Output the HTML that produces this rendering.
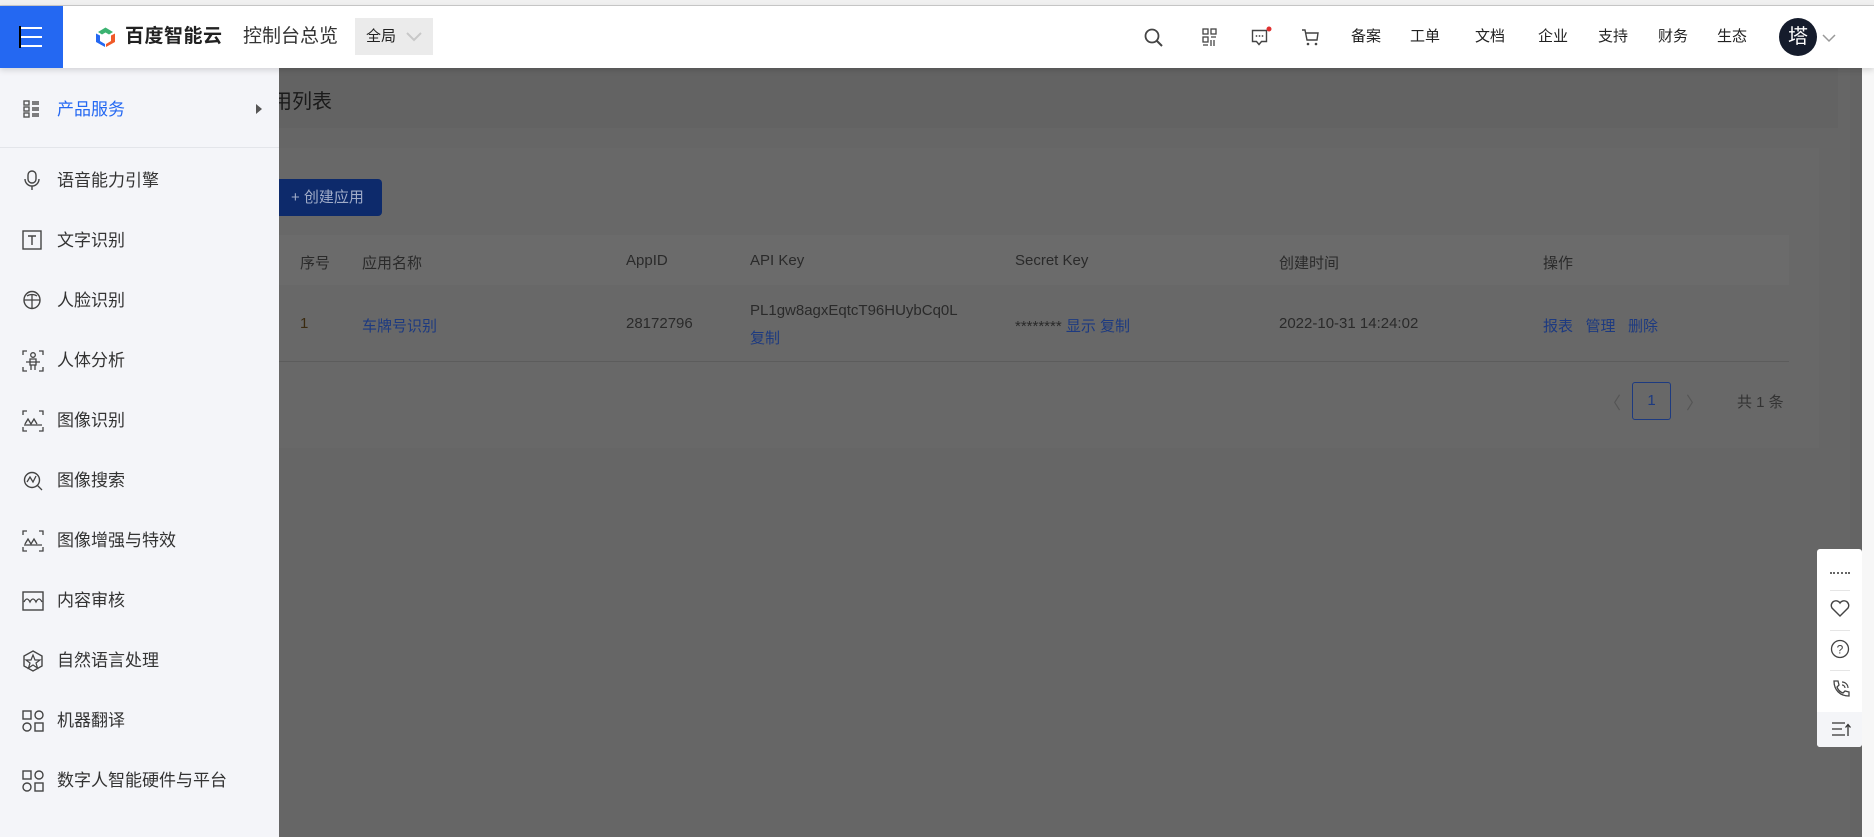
<!DOCTYPE html>
<html><head><meta charset="utf-8">
<style>
*{margin:0;padding:0;box-sizing:border-box}
body{width:1874px;height:837px;overflow:hidden;background:#666;font-family:"Liberation Sans","Noto Sans CJK SC",sans-serif;position:relative;color:#333}
.a{position:absolute}
.top{left:0;top:0;width:1874px;height:6px;background:#f0f0f0;border-bottom:1px solid #ccc}
.hdr{left:0;top:6px;width:1874px;height:62px;background:#fff;box-shadow:0 2px 6px rgba(0,0,0,.15);z-index:3}
.hdr .t{position:absolute;top:0;line-height:62px;font-size:15px;color:#222}
.side{left:0;top:68px;width:279px;height:769px;background:#f4f5f9;z-index:2}
.it{position:absolute;left:0;width:279px;height:30px;font-size:17px;color:#333;line-height:30px}
.it .tx{position:absolute;left:57px;top:1px}
.it svg{position:absolute;left:22px;top:5px}
.g{color:#2a2a2a;font-size:15px}
.lk{color:#1d3a80}
</style></head><body>
<div class="a top"></div>
<div class="a hdr">
  <div class="a" style="left:0;top:0;width:63px;height:62px;background:#2468f2"></div>
  <div class="a" style="left:20px;top:21px;width:22px;height:20px;border-top:2px solid #fff;border-bottom:2px solid #fff"></div>
  <div class="a" style="left:20px;top:30px;width:22px;height:2px;background:#fff"></div>
  <div class="a" style="left:19px;top:20px;width:2px;height:22px;background:#000"></div>
  <svg class="a" style="left:95px;top:20px" width="21" height="22" viewBox="0 0 21 22"><path d="M3 6L10.5 1.5L18 6L14 8.5L10.5 6.5L7 8.5Z" fill="#3cb371"/><path d="M1 7.5L5 9.5V15L10 18V21L1 16Z" fill="#2468f2"/><path d="M20 7.5L16 9.5V15L11 18V21L20 16Z" fill="#f05a28"/></svg>
  <div class="t" style="left:125px;font-size:19px;font-weight:bold;color:#222;letter-spacing:0.5px">百度智能云</div>
  <div class="t" style="left:243px;font-size:19px;color:#333">控制台总览</div>
  <div class="a" style="left:355px;top:12px;width:78px;height:37px;background:#ebebeb"></div>
  <div class="t" style="left:366px;font-size:15px">全局</div>
  <svg class="a" style="left:406px;top:26px" width="16" height="10"><path d="M1 1L8 8L15 1" stroke="#c8c8c8" stroke-width="2" fill="none"/></svg>
  <svg class="a" style="left:1144px;top:22px" width="20" height="20"><circle cx="8" cy="8" r="6.5" stroke="#444" stroke-width="1.8" fill="none"/><path d="M13 13L18 18" stroke="#444" stroke-width="2"/></svg>
  <svg class="a" style="left:1202px;top:22px" width="16" height="20"><g stroke="#444" stroke-width="1.3" fill="none"><rect x="1" y="1" width="5" height="5"/><rect x="9" y="1" width="5" height="5"/><rect x="1" y="9" width="5" height="5"/><path d="M9 9h5M9 12v6M12 12v6M1 17h5"/></g></svg>
  <svg class="a" style="left:1251px;top:20px" width="22" height="22"><path d="M1.5 4.5h14v11h-5l-2.5 3-2.5-3h-4z" stroke="#444" stroke-width="1.4" fill="none"/><circle cx="5.5" cy="10" r=".9" fill="#444"/><circle cx="8.5" cy="10" r=".9" fill="#444"/><circle cx="11.5" cy="10" r=".9" fill="#444"/><circle cx="18" cy="3" r="2.5" fill="#e03030"/></svg>
  <svg class="a" style="left:1301px;top:22px" width="20" height="20"><path d="M1 2h3l2 10h10l1-7H5" stroke="#444" stroke-width="1.4" fill="none"/><circle cx="7" cy="16" r="1.3" fill="#444"/><circle cx="15" cy="16" r="1.3" fill="#444"/></svg>
  <div class="t" style="left:1351px">备案</div>
  <div class="t" style="left:1410px">工单</div>
  <div class="t" style="left:1475px">文档</div>
  <div class="t" style="left:1538px">企业</div>
  <div class="t" style="left:1598px">支持</div>
  <div class="t" style="left:1658px">财务</div>
  <div class="t" style="left:1717px">生态</div>
  <div class="a" style="left:1779px;top:12px;width:38px;height:38px;border-radius:50%;background:#151c2c;color:#fff;font-size:20px;line-height:38px;text-align:center">塔</div>
  <svg class="a" style="left:1822px;top:28px" width="14" height="9"><path d="M1 1L7 7L13 1" stroke="#999" stroke-width="1.5" fill="none"/></svg>
</div>
<div class="a" style="left:279px;top:68px;width:1559px;height:60px;background:#636363"></div>
<div class="a" style="left:272px;top:85px;font-size:20px;color:#1a1a1a">用列表</div>
<div class="a" style="left:279px;top:148px;width:1540px;height:300px;background:#686868"></div>
<div class="a" style="left:279px;top:179px;width:103px;height:37px;background:#0d2a6b;border-radius:0 4px 4px 0;color:#a0acc8;font-size:15px;line-height:37px;padding-left:12px">+ 创建应用</div>
<div class="a" style="left:279px;top:235px;width:1510px;height:50px;background:#6b6b6b"></div>
<div class="a" style="left:279px;top:361px;width:1510px;height:1px;background:#5c5c5c"></div>
<div class="a g" style="left:300px;top:252px">序号</div>
<div class="a g" style="left:362px;top:252px">应用名称</div>
<div class="a g" style="left:626px;top:252px">AppID</div>
<div class="a g" style="left:750px;top:252px">API Key</div>
<div class="a g" style="left:1015px;top:252px">Secret Key</div>
<div class="a g" style="left:1279px;top:252px">创建时间</div>
<div class="a g" style="left:1543px;top:252px">操作</div>
<div class="a g" style="left:300px;top:315px;color:#3a2a10">1</div>
<div class="a g lk" style="left:362px;top:315px">车牌号识别</div>
<div class="a g" style="left:626px;top:315px">28172796</div>
<div class="a g" style="left:750px;top:302px">PL1gw8agxEqtcT96HUybCq0L</div>
<div class="a g lk" style="left:750px;top:327px">复制</div>
<div class="a g" style="left:1015px;top:315px">******** <span class="lk">显示 复制</span></div>
<div class="a g" style="left:1279px;top:315px">2022-10-31 14:24:02</div>
<div class="a g lk" style="left:1543px;top:315px">报表&nbsp;&nbsp; 管理&nbsp;&nbsp; 删除</div>
<div class="a" style="left:1604px;top:389px;font-size:17px;color:#555">〈</div>
<div class="a" style="left:1632px;top:382px;width:39px;height:38px;border:1.5px solid #1d3a80;border-radius:3px;color:#1d3a80;text-align:center;line-height:35px;font-size:15px">1</div>
<div class="a" style="left:1686px;top:389px;font-size:17px;color:#555">〉</div>
<div class="a g" style="left:1737px;top:391px;color:#333">共 1 条</div>
<div class="a" style="left:1862px;top:68px;width:12px;height:769px;background:#f7f7f7"></div>
<div class="a" style="left:1850px;top:68px;width:12px;height:769px;background:#646464"></div>
<div class="a" style="left:1817px;top:549px;width:45px;height:198px;background:#fff;border-radius:3px;overflow:hidden">
  <div class="a" style="left:13px;top:23px;width:20px;height:0;border-top:2px dotted #666"></div>
  <div class="a" style="left:13px;top:41px;width:20px;height:1px;background:#e5e5e5"></div>
  <svg class="a" style="left:13px;top:51px" width="20" height="18"><path d="M10 16L2 8A4 4 0 0 1 10 3A4 4 0 0 1 18 8Z" stroke="#444" stroke-width="1.4" fill="none"/></svg>
  <div class="a" style="left:13px;top:81px;width:20px;height:1px;background:#e5e5e5"></div>
  <svg class="a" style="left:13px;top:90px" width="20" height="20"><circle cx="10" cy="10" r="8.5" stroke="#444" stroke-width="1.3" fill="none"/><text x="10" y="14.5" font-size="12" text-anchor="middle" fill="#444" font-family="Liberation Sans">?</text></svg>
  <div class="a" style="left:13px;top:121px;width:20px;height:1px;background:#e5e5e5"></div>
  <svg class="a" style="left:14px;top:130px" width="20" height="20"><path d="M3 2l4 0 1 4-2 2c1 3 3 5 6 6l2-2 4 1v4c-9 0-15-6-15-15z" stroke="#444" stroke-width="1.3" fill="none"/><path d="M11 3a6 6 0 0 1 6 6M11 6a3 3 0 0 1 3 3" stroke="#444" stroke-width="1.2" fill="none"/></svg>
  <div class="a" style="left:0;top:163px;width:45px;height:35px;background:#f4f5f8"></div>
  <svg class="a" style="left:14px;top:172px" width="20" height="16"><path d="M1 2h13M1 8h10M1 14h13M17 15V4M14.5 6.5L17 3.5l2.5 3" stroke="#333" stroke-width="1.3" fill="none"/></svg>
</div>
<div class="a side">
  <div class="it" style="top:26px"><svg width="20" height="20"><g stroke="#555" stroke-width="1.4" fill="none"><rect x="2" y="2" width="5" height="4"/><rect x="2" y="8" width="5" height="4"/><rect x="2" y="14" width="5" height="4"/><path d="M10 3h7M10 5h7M10 9h7M10 11h7M10 15h7M10 17h7"/></g></svg><span class="tx" style="color:#2468f2">产品服务</span><svg style="left:256px;top:10px" width="6" height="10"><path d="M0 0L6 5L0 10Z" fill="#555"/></svg></div>
  <div class="a" style="left:0;top:79px;width:279px;height:1px;background:#e3e5ea"></div>
  <div class="it" style="top:97px"><svg width="20" height="20"><rect x="6" y="1" width="8" height="12" rx="4" stroke="#444" stroke-width="1.4" fill="none"/><path d="M3 9a7 7 0 0 0 14 0M10 16v4" stroke="#444" stroke-width="1.4" fill="none"/></svg><span class="tx">语音能力引擎</span></div>
  <div class="it" style="top:157px"><svg width="20" height="20"><rect x="1" y="1" width="18" height="18" stroke="#444" stroke-width="1.4" fill="none"/><path d="M6 6h8M10 6v9" stroke="#444" stroke-width="1.4"/></svg><span class="tx">文字识别</span></div>
  <div class="it" style="top:217px"><svg width="20" height="20"><ellipse cx="10" cy="10" rx="8" ry="8.5" stroke="#444" stroke-width="1.4" fill="none"/><path d="M2 10h16M10 4v14M5 6c3-2 7-2 10 0" stroke="#444" stroke-width="1.3" fill="none"/></svg><span class="tx">人脸识别</span></div>
  <div class="it" style="top:277px"><svg width="22" height="22"><path d="M1 5V1h4M17 1h4v4M1 17v4h4M21 17v4h-4" stroke="#444" stroke-width="1.3" fill="none"/><circle cx="11" cy="5" r="2.3" stroke="#444" stroke-width="1.3" fill="none"/><path d="M8 9h6v6h-6zM9 15v5M13 15v5M4 12h14" stroke="#444" stroke-width="1.3" fill="none"/></svg><span class="tx">人体分析</span></div>
  <div class="it" style="top:337px"><svg width="22" height="22"><path d="M1 5V1h4M17 1h4v4M1 17v4h4M21 17v4h-4M2 15h18M3 14l3-5 3 5 3-5 3 5" stroke="#444" stroke-width="1.3" fill="none"/></svg><span class="tx">图像识别</span></div>
  <div class="it" style="top:397px"><svg width="22" height="22"><circle cx="10" cy="10" r="7.5" stroke="#444" stroke-width="1.4" fill="none"/><path d="M15.5 15.5L20 20M5 12l3-5 3 5 3-6" stroke="#444" stroke-width="1.3" fill="none"/></svg><span class="tx">图像搜索</span></div>
  <div class="it" style="top:457px"><svg width="22" height="22"><path d="M1 5V1h4M17 1h4v4M1 17v4h4M21 17v4h-4M2 15h18M3 14l3-5 3 5 3-5 3 5" stroke="#444" stroke-width="1.3" fill="none"/></svg><span class="tx">图像增强与特效</span></div>
  <div class="it" style="top:517px"><svg width="22" height="22"><rect x="1" y="2" width="20" height="18" stroke="#444" stroke-width="1.4" fill="none"/><path d="M2 12c2-4 4-4 6 0 2-4 4-4 6 0 2-4 4-4 6 0" stroke="#444" stroke-width="1.3" fill="none"/></svg><span class="tx">内容审核</span></div>
  <div class="it" style="top:577px"><svg width="22" height="22"><path d="M11 1L20 6V16L11 21L2 16V6Z" stroke="#444" stroke-width="1.4" fill="none"/><path d="M11 5L13 10H18L14 13L15.5 18L11 15L6.5 18L8 13L4 10H9Z" stroke="#444" stroke-width="1.2" fill="none"/></svg><span class="tx">自然语言处理</span></div>
  <div class="it" style="top:637px"><svg width="22" height="22"><g stroke="#444" stroke-width="1.4" fill="none"><rect x="1" y="1" width="8" height="8"/><rect x="13" y="1" width="8" height="8" rx="4"/><rect x="1" y="13" width="8" height="8" rx="4"/><rect x="13" y="13" width="8" height="8"/></g></svg><span class="tx">机器翻译</span></div>
  <div class="it" style="top:697px"><svg width="22" height="22"><g stroke="#444" stroke-width="1.4" fill="none"><rect x="1" y="1" width="8" height="8"/><rect x="13" y="1" width="8" height="8" rx="4"/><rect x="1" y="13" width="8" height="8" rx="4"/><rect x="13" y="13" width="8" height="8"/></g></svg><span class="tx">数字人智能硬件与平台</span></div>
</div>
</body></html>
